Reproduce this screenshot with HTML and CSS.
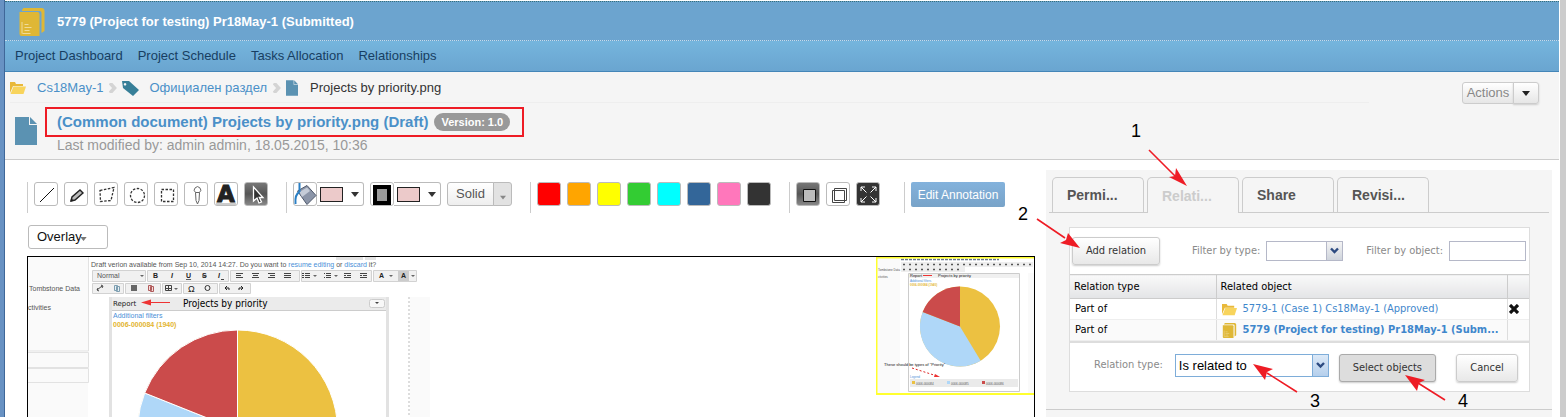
FILE: index.html
```html
<!DOCTYPE html>
<html lang="en">
<head>
<meta charset="utf-8">
<title>Projects by priority.png</title>
<link rel="stylesheet" href="styles.css">
</head>
<body>
<svg class="defs" aria-hidden="true">
  <symbol id="folder" viewBox="0 0 16 12"><path fill="#e9b93a" d="M0 0h5l1 2h7v2H3L0 11z"/><path fill="#f8d45c" d="M3.500 4.500H16L13.500 12H.5z"/></symbol>
  <symbol id="project" viewBox="0 0 25 28"><path fill="#dfb735" d="M4 0h18a3 3 0 0 1 3 3v20l-3 2V5a2 2 0 0 0-2-2H2.500V2z"/><path fill="#dfb735" d="M0 4h18a2 2 0 0 1 2 2v22H2a2 2 0 0 1-2-2z"/><path stroke="#fff" stroke-opacity=".5" d="M2.500 14V25.500M5 16.500h4M5 19.500h7M5 22.500h5M3 25.500h8"/></symbol>
  <symbol id="file" viewBox="0 0 22 28"><path fill="#5b92b2" d="M0 0h14v8h8v20H0z"/><path fill="#5b92b2" d="M15 0l7 7h-7z"/></symbol>
  <symbol id="sep" viewBox="0 0 8 10"><path fill="none" stroke="#d4d4d4" stroke-width="3.600" d="M1 0l4.500 5L1 10"/></symbol>
  <symbol id="down" viewBox="0 0 8 5"><path fill="currentColor" d="M0 0h8L4 5z"/></symbol>
  <symbol id="chev" viewBox="0 0 9 7"><path fill="none" stroke="#2c4a80" stroke-width="2.400" d="M1 1l3.500 3.500L8 1"/></symbol>
</svg>
<div class="app">
  <header class="top">
    <svg class="top-icon"><use href="#project"/></svg>
    <h1>5779 (Project for testing) Pr18May-1 (Submitted)</h1>
  </header>
  <nav class="menu"><a href="#">Project Dashboard</a><a href="#">Project Schedule</a><a href="#">Tasks Allocation</a><a href="#">Relationships</a></nav>
  <section class="heading">
    <div class="crumbs">
      <svg class="c-folder"><use href="#folder"/></svg><a href="#">Cs18May-1</a><svg class="c-sep"><use href="#sep"/></svg>
      <svg class="c-tag" viewBox="0 0 17 15"><path fill="#377f98" fill-rule="evenodd" d="M0 0h7l10 9-6 6L1 7zM3 2a1.300 1.300 0 1 0 .1 0z"/></svg><a href="#">Официален раздел</a><svg class="c-sep"><use href="#sep"/></svg>
      <svg class="c-file"><use href="#file"/></svg><span>Projects by priority.png</span>
    </div>
    <div class="actions"><button>Actions</button><button aria-label="More actions"><svg class="dn"><use href="#down"/></svg></button></div>
    <div class="doc">
      <svg class="doc-icon"><use href="#file"/></svg>
      <div>
        <div class="marked"><h2>(Common document) Projects by priority.png (Draft)</h2><span class="badge">Version: 1.0</span></div>
        <p>Last modified by: admin admin, 18.05.2015, 10:36</p>
      </div>
    </div>
  </section>
  <main class="content">
    <section class="viewer">
      <div class="tools">
        <div class="group shapes">
          <button class="tool" aria-label="Line"><svg viewBox="0 0 24 24"><path stroke="#111" d="M6 20L20 6"/></svg></button>
          <button class="tool" aria-label="Pencil"><svg viewBox="0 0 24 24"><path fill="#bbb" stroke="#222" stroke-width="1.400" d="M7 19l1-4 8-7 3 3-8 7z"/><path stroke="#222" d="M7 19l2-.5-1.500-1.500z"/></svg></button>
          <button class="tool" aria-label="Polygon"><svg viewBox="0 0 24 24"><path class="dash" d="M6 8.500l14-3-3 13-10.500 1z"/></svg></button>
          <button class="tool" aria-label="Circle"><svg viewBox="0 0 24 24"><circle class="dash" cx="13.500" cy="13.500" r="7"/></svg></button>
          <button class="tool" aria-label="Rectangle"><svg viewBox="0 0 24 24"><path class="dash" d="M7.500 7.500h12v12h-12z"/></svg></button>
          <button class="tool" aria-label="Pin"><svg viewBox="0 0 24 24"><path fill="none" stroke="#666" d="M11.500 10.500a3.200 3.200 0 1 1 4 0l-.5 8-1.500 3.500-1.500-3.500zM11.500 10.500h4"/></svg></button>
          <button class="tool" aria-label="Text"><svg viewBox="0 0 24 24"><path fill="#ccc" d="M2 21h20v2H2z"/><text x="3" y="20" class="big-a">A</text></svg></button>
          <button class="tool dark" aria-label="Select"><svg viewBox="0 0 24 24"><path fill="#333" stroke="#fff" stroke-width="1.300" d="M9.500 5v14l3.500-3 2 5 2.500-1-2.200-4.500H19z"/></svg></button>
        </div>
        <div class="group paints">
          <div class="combo"><button class="tool" aria-label="Fill"><svg viewBox="0 0 24 24"><path fill="#8b95a8" stroke="#4e586b" d="M4.500 9L14 3.500l9 10-9 9z"/><path fill="#c5ccd8" d="M6.500 10l7.500-4.500 3 3.500-8 6z"/><path fill="none" stroke="#2a7fc4" stroke-width="2" d="M6.500 1v9M2.500 22c-.5-6 0-10 4-12"/></svg></button><button class="pick" aria-label="Fill colour"><i></i><svg class="dn"><use href="#down"/></svg></button></div>
          <div class="combo"><button class="tool" aria-label="Border"><svg viewBox="0 0 24 24"><path fill="#9b9b9b" stroke="#000" stroke-width="4" d="M5 5h14v16H5z"/></svg></button><button class="pick" aria-label="Border colour"><i></i><svg class="dn"><use href="#down"/></svg></button></div>
          <div class="solid"><button>Solid</button><button aria-label="Line style"><svg class="dn"><use href="#down"/></svg></button></div>
        </div>
        <div class="group colours">
          <button class="sw red" aria-label="Red"></button><button class="sw orange" aria-label="Orange"></button><button class="sw yellow" aria-label="Yellow"></button><button class="sw green" aria-label="Green"></button><button class="sw cyan" aria-label="Cyan"></button><button class="sw blue" aria-label="Blue"></button><button class="sw pink" aria-label="Pink"></button><button class="sw black" aria-label="Black"></button>
        </div>
        <div class="group views">
          <button class="tool dark" aria-label="Single"><svg viewBox="0 0 24 24"><path fill="#bbb" stroke="#111" d="M7.500 7.500h12v12h-12z"/></svg></button>
          <button class="tool" aria-label="Layers"><svg viewBox="0 0 24 24"><path fill="none" stroke="#444" d="M8.500 6.500h12v12h-12zM6.500 8.500h12v12h-12z"/></svg></button>
          <button class="tool black" aria-label="Full screen"><svg viewBox="0 0 24 24"><path fill="none" stroke="#fff" d="M5 5l5.500 5.500M20 5l-5.500 5.500M5 20l5.500-5.500M20 20l-5.500-5.500M5 9V5h4M16 5h4v4M5 16v4h4M20 16v4h-4"/></svg></button>
        </div>
        <div class="group edit"><button class="primary">Edit Annotation</button></div>
      </div>
      <button class="overlay">Overlay<svg class="dn"><use href="#down"/></svg></button>
      <div class="canvas">
        <svg class="page" viewBox="28 257 403 160" role="img" aria-label="Draft document">
          <path fill="#fafafa" stroke="#e2e2e2" d="M27 256h61.500v95H27M27 352.500h61.500v15H27M27 368.500h61.500v14H27"/>
          <path fill="#fafafa" d="M28 383h60v34H28zM410 297h20v120h-20z"/>
          <path fill="#e4e4e4" d="M336 257h27v3h-27zM365 257h11v3h-11z"/>
          <path stroke="#ddd" stroke-width="2" stroke-dasharray="2" d="M409 297v120"/>
          <g class="tiny"><text x="29" y="291">Tombstone Data</text><text x="28" y="310">ctivities</text>
          <text x="91" y="267">Draft verion available from Sep 10, 2014 14:27. Do you want to <tspan class="lnk">resume editing</tspan> or <tspan class="lnk">discard</tspan> it?</text></g>
          <path fill="#f1f1f1" stroke="#d2d2d2" d="M92.500 270.500h53v11h-53zM147.500 270.500h81v11h-81zM230.500 270.500h69v11h-69zM301.500 270.500h70v11h-70zM373.500 270.500h43v11h-43zM92.500 283.500h31v10h-31zM125.500 283.500h35v10h-35zM162.500 283.500h19v10h-19zM183.500 283.500h34v10h-34zM219.500 283.500h31v10h-31z"/>
          <path fill="#ccc" d="M398 271h11v10h-11z"/>
          <g class="tiny"><text x="97" y="278">Normal</text><g class="b"><text x="153" y="278">B</text><text x="171" y="278" font-style="italic">I</text><text x="186" y="278" text-decoration="underline">U</text><text x="202" y="278" text-decoration="line-through">S</text><text x="218" y="278" font-style="italic">I</text><text x="379" y="278">A</text><text x="401" y="278">A</text></g><text class="sym" x="188" y="292">Ω</text></g>
          <path fill="#666" d="M140 275h4l-2 2zM313 275h4l-2 2zM334 275h4l-2 2zM389 275h4l-2 2zM411 275h4l-2 2zM174 288h4l-2 2z"/>
          <path fill="none" stroke="#444" d="M221 279.500h3M236 273.500h7M236 275.500h5M236 277.500h7M252 273.500h7M253 275.500h5M252 277.500h7M268 273.500h7M270 275.500h5M268 277.500h7M284 273.500h7M284 275.500h7M284 277.500h7M302 273.500h2M305 273.500h5M302 275.500h2M305 275.500h5M302 277.500h2M305 277.500h5M324 273.500h1M326 273.500h5M324 277.500h1M326 275.500h5M326 277.500h5M344 273.500h7M344 275.500h2M347 275.500h4M344 277.500h7M360 273.500h7M360 275.500h2M363 275.500h4M360 277.500h7M97 290l5-4M98 288l-1 2 2 1M101 285l2 1-1 2M165.500 285.500h6v5h-6zM165 288.500h6M168.500 285v6"/>
          <path fill="#e8f0f5" stroke="#7d9eb0" d="M114.500 285.500h3v5h-3zM116.500 286.500h3v5h-3z"/><path fill="#f4dddd" stroke="#b05b5b" d="M148.500 285.500h3v5h-3zM150.500 286.500h3v5h-3z"/><path fill="#666" d="M131 285h6v6h-6z"/><circle cx="207.500" cy="288" r="2.500" fill="none" stroke="#333"/><path fill="none" stroke="#222" d="M229 290v-2h-4m2-2l-2 2 2 2M239 290v-2h4m-2-2l2 2-2 2"/>
          <path fill="#ebebeb" d="M109 297h280v13H109z"/><path fill="none" stroke="#e2e2e2" stroke-width="3" d="M110.500 297v120M387.500 297v120"/><path stroke="#ccc" d="M112 310.500h274"/>
          <rect x="369.500" y="299.500" width="15" height="8" rx="2" fill="#f8f8f8" stroke="#ccc"/><path fill="#444" d="M375 302h4l-2 2z"/>
          <text class="report" x="113" y="306">Report</text><text class="caption" x="183" y="307">Projects by priority</text>
          <path stroke="#e33" d="M150 302.500h20"/><path fill="#e33" d="M141 302.500l10-3v6z"/>
          <g class="tiny"><text class="lnk" x="113" y="318">Additional filters</text><text class="gold" x="113" y="327">0006-000084 (1940)</text></g>
          <g stroke="#fff"><circle cx="237.500" cy="430" r="100" fill="#ecc141"/><path fill="#afd7f8" d="M237.500 430L144.700 393A100 100 0 0 0 290 515z"/><path fill="#cb4b4b" d="M237.500 430V330A100 100 0 0 0 144.700 393z"/></g>
        </svg>
        <svg class="thumb" viewBox="876 257 158 142" role="img" aria-label="Document thumbnail">
          <path fill="#fafafa" d="M876 257h24v137h-24zM1028 273h6v120h-6z"/>
          <path stroke="#66768a" stroke-width="1.500" stroke-dasharray="3 1" d="M901 259.500h98"/>
          <path fill="#eee" d="M901 262h132v5H901zM901 267h64v5h-64z"/>
          <path stroke="#555" stroke-width="1.500" stroke-dasharray="2 4" d="M903 264.500h128M903 269.500h60"/>
          <g class="micro"><text x="878" y="271">Tombstone Data</text><text x="878" y="278">ctivities</text></g>
          <path fill="#f0f0f0" stroke="#ccc" d="M908.500 273.500h111v118h-111z"/><path fill="#fff" d="M909 278h110v113H909z"/>
          <text class="mini" x="910" y="277">Report</text><path stroke="#e33" d="M923 275.500h9"/><text class="mini wide" x="938" y="277">Projects by priority</text>
          <g class="micro"><text class="lnk" x="910" y="282">Additional filters</text><text class="gold" x="910" y="286">0006-000084 (1940)</text></g>
          <circle cx="960" cy="326.500" r="40" fill="#ecc141"/><path fill="#afd7f8" d="M960 326.500L922.700 312A40 40 0 0 0 980.700 360.800z"/><path fill="#cb4b4b" d="M960 326.500v-40A40 40 0 0 0 922.700 312z"/>
          <text class="mini note" x="884" y="366">These should be types of "Priority"</text>
          <path stroke="#d22" stroke-dasharray="2" d="M912 368l25 8"/><path fill="#e33" d="M940 377l-5-3-1 3z"/>
          <path fill="#eaeaea" d="M910 379h108v8H910z"/><path fill="#ecc141" d="M912 381h3v3h-3z"/><path fill="#afd7f8" d="M947 381h3v3h-3z"/><path fill="#cb4b4b" d="M982 381h3v3h-3z"/>
          <g class="micro"><text x="910" y="378" class="lnk">Legend</text><text x="916" y="385">0006-000084</text><text x="951" y="385">0006-000085</text><text x="986" y="385">0006-000086</text></g>
          <path fill="none" stroke="#ffff2e" stroke-width="2" d="M1034 257.500H876.500v136.500H1034"/>
        </svg>
      </div>
    </section>
    <aside class="side">
      <div class="tabs"><button>Permi...</button><button class="on">Relati...</button><button>Share</button><button>Revisi...</button></div>
      <div class="box">
        <div class="filters">
          <button class="btn">Add relation</button>
          <label for="ft">Filter by type:</label><span class="sel"><select id="ft"><option></option></select><svg class="chev"><use href="#chev"/></svg></span>
          <label for="fo">Filter by object:</label><input id="fo" type="text">
        </div>
        <table>
          <thead><tr><th class="c1">Relation type</th><th>Related object</th><th class="c3"></th></tr></thead>
          <tbody>
            <tr><td>Part of</td><td><a href="#"><svg class="r-icon"><use href="#folder"/></svg>5779-1 (Case 1) Cs18May-1 (Approved)</a></td><td class="x"><svg viewBox="0 0 10 10"><path stroke="#111" stroke-width="3.200" d="M1 1l8 8M9 1L1 9"/></svg></td></tr>
            <tr class="alt"><td>Part of</td><td><a href="#" class="strong"><svg class="r-icon"><use href="#project"/></svg>5779 (Project for testing) Pr18May-1 (Subm...</a></td><td></td></tr>
          </tbody>
        </table>
        <div class="pickrow">
          <label for="rt">Relation type:</label><span class="sel focus"><select id="rt"><option>Is related to</option></select><svg class="chev"><use href="#chev"/></svg></span>
          <button class="btn pressed">Select objects</button><button class="btn cancel">Cancel</button>
        </div>
      </div>
    </aside>
  </main>
  <svg class="arrows" viewBox="0 0 1566 417" aria-hidden="true">
    <g stroke="#ee1c25" stroke-width="1.600"><path d="M1149 150l27 27M1037 219l28 19M1297 392l-30-19M1445 400l-27-17"/></g>
    <g fill="#ee1c25"><path d="M1187 186l-18-9 6-1 1-8z"/><path d="M1080 248l-20-5 6-3 2-7z"/><path d="M1253 364l20 5-6 3-2 8z"/><path d="M1405 375l20 5-6 3-2 8z"/></g>
    <g class="num"><text x="1131" y="137">1</text><text x="1018" y="220">2</text><text x="1310" y="407">3</text><text x="1458" y="407">4</text></g>
  </svg>
</div>
</body>
</html>
```
FILE: styles.css
```css
* { box-sizing: border-box; }
body { margin: 0; font: 13px/16px "Liberation Sans", Arial, sans-serif; color: #333; background: #fff; overflow: hidden; }
button, input, select { font: inherit; color: inherit; margin: 0; padding: 0; }
h1, h2, p { margin: 0; }
a { color: #4a90c8; text-decoration: none; }
svg { display: block; flex: none; }
.defs { width: 0; height: 0; position: absolute; }
.app { position: relative; min-height: 100vh; border-left: 4px solid #6892c3; border-right: 6px solid #ccc; box-shadow: inset 1px 0 #3f6799; padding: 1px 1px 0; }

.top { display: flex; align-items: center; gap: 12px; height: 40px; padding: 1px 0 0 14px; background: #6ca4cf; border-top: 1px dotted #356f7a; border-bottom: 1px dotted #c4dcec; }
.top-icon { width: 26px; height: 28px; }
.top h1 { font-size: 13px; color: #fff; }
.menu { display: flex; gap: 15px; height: 31px; padding: 7px 10px; background: linear-gradient(#75b5dd, #6aa5d0); border-bottom: 1px solid #4486b8; }
.menu a { color: #173e62; }

.heading { position: relative; height: 88px; background: #f5f5f5; border-bottom: 1px solid #ccc; }
.crumbs { display: flex; align-items: center; height: 31px; padding-top: 2px; margin: 0 190px 0 5px; border-bottom: 1px solid #eee; }
.c-folder { width: 16px; height: 12px; margin-right: 11px; }
.c-sep { width: 8px; height: 10px; margin: 0 5px 0 6px; }
.c-tag { width: 17px; height: 15px; margin-right: 10px; }
.c-file { width: 12px; height: 16px; margin-right: 12px; }
.actions { position: absolute; right: 20px; top: 10px; display: flex; height: 22px; }
.actions button { border: 1px solid #ccc; background: linear-gradient(#fff, #e6e6e6); color: #888; width: 52px; border-radius: 3px 0 0 3px; }
.actions button + button { width: 26px; margin-left: -1px; border-radius: 0 3px 3px 0; color: #222; box-shadow: 0 1px 2px #ccc; display: grid; place-items: center; }
.dn { width: 8px; height: 5px; }
.doc { display: flex; gap: 8px; padding: 4px 0 0 10px; }
.doc-icon { width: 22px; height: 28px; margin-top: 10px; }
.marked { display: flex; align-items: center; gap: 6px; height: 30px; padding: 0 12px 0 10px; border: 2px solid #ee1c25; }
.marked h2 { font-size: 15px; color: #4a90c8; }
.badge { background: #999; color: #fff; font-weight: bold; font-size: 11px; padding: 1px 7px; border-radius: 9px; }
.doc p { font-size: 14px; color: #999; padding-left: 12px; }

.content { display: flex; justify-content: space-between; gap: 11px; padding: 10px 7px 0 22px; }
.viewer { flex: 1; min-width: 0; padding-top: 12px; }
.tools { display: flex; height: 31px; }
.group { display: flex; align-items: flex-start; border-left: 1px solid #ccc; padding-left: 6px; }
.shapes { gap: 6px; width: 259px; }
.paints { gap: 6px; width: 244px; }
.colours { gap: 6px; width: 259px; }
.views { gap: 6px; width: 115px; padding-left: 6px; }
.edit { padding-left: 6px; }
.tool, .sw { width: 24px; height: 24px; border: 1px solid #bbb; border-radius: 3px; background: #fff; flex: none; }
.tool svg { width: 24px; height: 24px; margin: -1px; }
.dark { background: linear-gradient(#777, #555 50%, #888); }
.tool.black { background: #333; }
.dash { fill: none; stroke: #333; stroke-width: 1.3; stroke-dasharray: 2.500 1.500; }
.big-a { font: bold 23px "DejaVu Sans", sans-serif; fill: #222; stroke: #222; }
.combo { display: flex; }
.pick { display: flex; align-items: center; gap: 8px; width: 47px; height: 24px; padding: 0 4px 0 3px; border: 1px solid #bbb; border-left: 0; border-radius: 0 3px 3px 0; background: #fff; }
.pick i { width: 25px; height: 15px; background: #eccaca; border: 1px solid #222; }
.pick .dn { width: 8px; height: 7px; }
.solid { display: flex; height: 24px; color: #555; }
.solid button { width: 47px; border: 1px solid #bbb; border-radius: 3px 0 0 3px; background: linear-gradient(#fff, #eee); }
.solid button + button { width: 19px; margin-left: -1px; border-radius: 0 3px 3px 0; background: #e2e2e2; color: #888; padding: 6px 0 0 6px; }
.solid .dn { width: 6px; height: 5px; }
.red { background: #f00; } .orange { background: #ffa500; } .yellow { background: #ff0; } .green { background: #3c3; } .cyan { background: #0ff; } .blue { background: #369; } .pink { background: #f7b; } .sw.black { background: #333; }
.primary { width: 94px; height: 25px; border: 0; border-radius: 2px; font-size: 12px; color: #fff; background: linear-gradient(#83b2dc, #78a3c8); }
.overlay { display: flex; align-items: center; width: 80px; height: 24px; margin: 12px 0 7px 1px; padding-left: 8px; border: 1px solid #bbb; border-radius: 3px; background: #fff; color: #111; }
.overlay .dn { width: 7px; height: 4px; color: #777; margin: 4px 0 0 -2px; }
.canvas { display: flex; justify-content: space-between; border: 1px solid #000; border-bottom: 0; height: 161px; overflow: hidden; }
.page { width: 403px; height: 160px; }
.thumb { width: 158px; height: 142px; }
.tiny { font-size: 7px; fill: #555; }
.b { font-weight: bold; fill: #222; }
.sym { font-size: 9px; fill: #222; }
.lnk { fill: #4a90d8; }
.gold { fill: #e3b530; font-weight: bold; }
.report { font: 7px "DejaVu Sans", sans-serif; fill: #222; }
.caption { font: 10px "DejaVu Sans Condensed", "DejaVu Sans", sans-serif; fill: #000; }
.micro { font-size: 3px; fill: #555; }
.mini { font-size: 4px; fill: #111; }
.note { font-size: 4px; }

.side { width: 506px; height: 247px; background: #f5f5f5; font: 11px/14px "DejaVu Sans Condensed", "DejaVu Sans", sans-serif; }
.side::after { content: ""; display: block; margin-top: 17px; border-top: 1px solid #ccc; }
.tabs { display: flex; gap: 3px; height: 43px; margin: 0 3px; padding: 7px 3px 0; border-bottom: 1px solid #ccc; }
.tabs button { width: 92px; height: 35px; padding: 0 14px; text-align: left; font: bold 14px "Liberation Sans", Arial, sans-serif; color: #555; background: #f5f5f5; border: 1px solid #ccc; border-bottom: 0; border-radius: 5px 5px 0 0; }
.tabs .on { height: 36px; color: #ccc; }
.box { margin: 14px 22px 0 23px; border: 1px solid #ddd; background: #fff; }
.filters { display: flex; align-items: center; height: 46px; padding: 0 3px 0 2px; }
.filters label { margin-right: 6px; }
.filters label, .pickrow label { color: #8a8a8a; }
.filters .btn { width: 88px; margin-right: auto; }
.filters .sel { width: 77px; height: 20px; margin-right: 23px; }
.filters input { width: 77px; height: 20px; border: 1px solid #b5b8c8; }
.btn { height: 28px; border: 1px solid #ccc; border-radius: 3px; background: linear-gradient(#fff, #e8e8e8); color: #333; box-shadow: 0 1px 2px #ccc; }
.sel { display: grid; grid-template-columns: 1fr 16px; border: 1px solid #b5b8c8; }
.sel select { grid-area: 1 / 1 / 2 / 3; appearance: none; border: 0; background: transparent; width: 100%; padding-left: 3px; }
.chev { grid-area: 1 / 2; width: 100%; height: 100%; padding: 5px 3px; background: linear-gradient(#f4f4f4, #cfd4dc); border-left: 1px solid #b5b8c8; pointer-events: none; }
table { width: 100%; table-layout: fixed; border-collapse: collapse; color: #000; }
th { height: 24px; font-weight: normal; text-align: left; padding: 0 4px; background: linear-gradient(#f9f9f9, #e3e4e6); border: 1px solid #ccc; border-width: 1px 0 1px 1px; }
th:first-child { border-left: 0; }
.c1 { width: 146px; } .c3 { width: 22px; }
td { height: 21px; padding: 0 5px; border-left: 1px solid #ddd; border-bottom: 1px solid #eee; white-space: nowrap; overflow: hidden; }
td:first-child { border-left: 0; }
.alt { background: #fafafa; }
td a { display: flex; align-items: center; gap: 6px; color: #3f87cc; }
.strong { font-weight: bold; }
.r-icon { width: 15px; height: 15px; }
.x { padding: 0; } .x svg { width: 10px; height: 10px; margin-left: 1px; }
.pickrow { display: flex; align-items: flex-start; height: 50px; padding: 11px 11px 0 24px; border-top: 2px solid #ddd; }
.pickrow label { padding-top: 4px; margin-right: 12px; }
.focus { width: 154px; height: 23px; border-color: #7eadd9; color: #000; font: 13px "Liberation Sans", Arial, sans-serif; }
.focus .chev { background: linear-gradient(#dce9f7, #b5cfec); border-color: #7eadd9; }
.pressed { width: 97px; margin-left: 10px; background: #ddd; border-color: #aaa; }
.cancel { width: 62px; margin-left: auto; }
.arrows { position: absolute; left: 0; top: 0; width: 1566px; height: 417px; margin-left: -4px; pointer-events: none; }
.num { font-size: 18px; fill: #000; }
```
